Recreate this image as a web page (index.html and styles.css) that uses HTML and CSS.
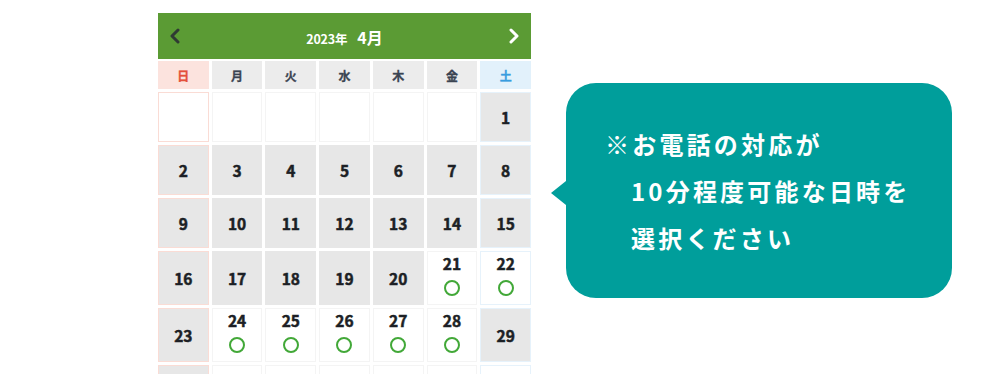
FILE: index.html
```html
<!DOCTYPE html>
<html lang="ja">
<head>
<meta charset="utf-8">
<title>カレンダー</title>
<link rel="stylesheet" href="styles.css">
</head>
<body>
<main class="page">
  <section class="calendar">
    <header class="cal-head">
      <span class="nav prev" aria-label="前の月">
        <svg width="12" height="16" viewBox="0 0 12 16"><path d="M9 2 L3 8 L9 14" fill="none" stroke="#2f3a33" stroke-width="3" stroke-linecap="round" stroke-linejoin="round"/></svg>
      </span>
      <h1 class="title"><span class="year">2023年</span><span class="month">4月</span></h1>
      <span class="nav next" aria-label="次の月">
        <svg width="12" height="16" viewBox="0 0 12 16"><path d="M3 2 L9 8 L3 14" fill="none" stroke="#ffffff" stroke-width="3" stroke-linecap="round" stroke-linejoin="round"/></svg>
      </span>
    </header>
    <div class="dow">
      <div class="dow-cell sun">日</div>
      <div class="dow-cell">月</div>
      <div class="dow-cell">火</div>
      <div class="dow-cell">水</div>
      <div class="dow-cell">木</div>
      <div class="dow-cell">金</div>
      <div class="dow-cell sat">土</div>
    </div>
    <div class="days">
      <div class="cell empty sun"></div>
      <div class="cell empty"></div>
      <div class="cell empty"></div>
      <div class="cell empty"></div>
      <div class="cell empty"></div>
      <div class="cell empty"></div>
      <div class="cell off sat">1</div>

      <div class="cell off sun">2</div>
      <div class="cell off">3</div>
      <div class="cell off">4</div>
      <div class="cell off">5</div>
      <div class="cell off">6</div>
      <div class="cell off">7</div>
      <div class="cell off sat">8</div>

      <div class="cell off sun">9</div>
      <div class="cell off">10</div>
      <div class="cell off">11</div>
      <div class="cell off">12</div>
      <div class="cell off">13</div>
      <div class="cell off">14</div>
      <div class="cell off sat">15</div>

      <div class="cell off sun">16</div>
      <div class="cell off">17</div>
      <div class="cell off">18</div>
      <div class="cell off">19</div>
      <div class="cell off">20</div>
      <div class="cell open"><span class="num">21</span><span class="mark"></span></div>
      <div class="cell open sat"><span class="num">22</span><span class="mark"></span></div>

      <div class="cell off sun">23</div>
      <div class="cell open"><span class="num">24</span><span class="mark"></span></div>
      <div class="cell open"><span class="num">25</span><span class="mark"></span></div>
      <div class="cell open"><span class="num">26</span><span class="mark"></span></div>
      <div class="cell open"><span class="num">27</span><span class="mark"></span></div>
      <div class="cell open"><span class="num">28</span><span class="mark"></span></div>
      <div class="cell off sat">29</div>

      <div class="cell off sun"></div>
      <div class="cell empty"></div>
      <div class="cell empty"></div>
      <div class="cell empty"></div>
      <div class="cell empty"></div>
      <div class="cell empty"></div>
      <div class="cell empty sat"></div>
    </div>
  </section>

  <aside class="bubble">
    <p class="line">※お電話の対応が</p>
    <p class="line indent">10分程度可能な日時を</p>
    <p class="line indent">選択ください</p>
  </aside>
</main>
</body>
</html>
```

FILE: styles.css
```css
* {
  box-sizing: border-box;
}

html, body {
  margin: 0;
  padding: 0;
  background: #ffffff;
}

body {
  font-family: "Noto Sans CJK JP", "Noto Sans", sans-serif;
  color: #222;
}

.page {
  display: flex;
  align-items: flex-start;
  padding: 13px 0 0 158px;
}

/* ---------- calendar ---------- */
.calendar {
  width: 373px;
  height: 361px;
  overflow: hidden;
  display: flex;
  flex-direction: column;
}

.cal-head {
  height: 46px;
  flex: none;
  background: #5b9b34;
  display: flex;
  align-items: center;
  justify-content: space-between;
  padding: 0 11px 0 11px;
}

.nav {
  display: flex;
  width: 12px;
  height: 16px;
}

.title {
  margin: 0;
  color: #ffffff;
  font-weight: 700;
  display: flex;
  align-items: baseline;
  gap: 10px;
  line-height: 1;
  padding-top: 2px;
}

.year {
  font-size: 12.5px;
  letter-spacing: -0.2px;
}

.month {
  font-size: 16px;
}

.dow {
  margin-top: 2px;
  height: 28px;
  flex: none;
  display: grid;
  grid-template-columns: repeat(7, 1fr);
  gap: 3px;
}

.dow-cell {
  background: #ececec;
  color: #3b4452;
  font-size: 12px;
  font-weight: 700;
  -webkit-text-stroke: 0.3px currentColor;
  display: flex;
  align-items: center;
  justify-content: center;
}

.dow-cell.sun {
  background: #fce3de;
  color: #e4503b;
}

.dow-cell.sat {
  background: #e2f1fb;
  color: #389ddf;
}

.days {
  margin-top: 3px;
  display: grid;
  grid-template-columns: repeat(7, 1fr);
  grid-template-rows: 50px 50px 50px 54px 54px 54px;
  gap: 3px;
}

.cell {
  border: 1px solid #f4f4f4;
  background: #ffffff;
  font-size: 15.5px;
  font-weight: 700;
  -webkit-text-stroke: 0.5px #1c1f25;
  color: #1c1f25;
  display: flex;
  align-items: center;
  justify-content: center;
  line-height: 18px;
}

.cell.off {
  background: #e7e7e7;
  border-color: #e7e7e7;
}

.cell.sun {
  border-color: #fadcd5;
}

.cell.sat {
  border-color: #e6f2fb;
}

.cell.open {
  flex-direction: column;
  justify-content: flex-start;
  padding-top: 2px;
  gap: 8px;
}

.mark {
  width: 16px;
  height: 16px;
  border: 2.6px solid #42a838;
  border-radius: 50%;
}

/* ---------- speech bubble ---------- */
.bubble {
  position: relative;
  margin: 70px 0 0 35px;
  width: 386px;
  height: 215px;
  background: #009e9b;
  border-radius: 30px;
  padding: 37px 0 0 39px;
  color: #ffffff;
}

.bubble::before {
  content: "";
  position: absolute;
  left: -15px;
  top: 98px;
  border-right: 15px solid #009e9b;
  border-top: 12px solid transparent;
  border-bottom: 12px solid transparent;
}

.line {
  margin: 0;
  font-size: 24px;
  font-weight: 700;
  letter-spacing: 3.2px;
  line-height: 47px;
  white-space: nowrap;
}

.line.indent {
  padding-left: 26px;
}
```
